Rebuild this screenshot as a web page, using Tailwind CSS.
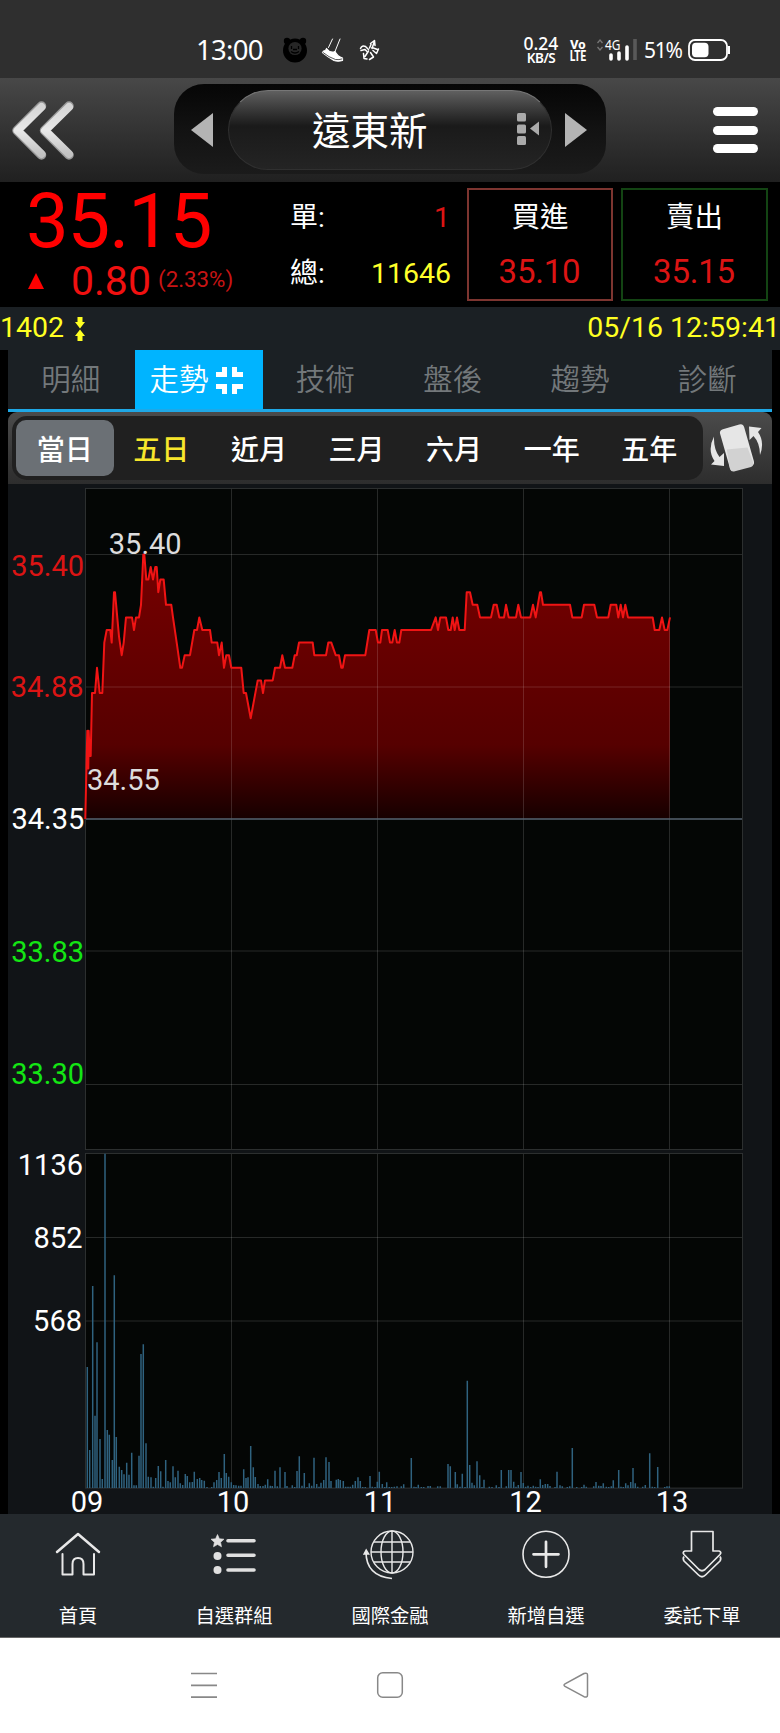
<!DOCTYPE html>
<html lang="zh-Hant">
<head>
    <meta charset="UTF-8">
    <meta name="viewport" content="width=device-width, initial-scale=1.0">
    <title>遠東新 1402</title>
    <script src="https://cdn.jsdelivr.net/npm/@tailwindcss/browser@4"></script>
</head>
<body class="w-[780px] h-[1733px] bg-black overflow-hidden flex flex-col font-[Roboto,'Noto_Sans_CJK_TC',sans-serif] leading-none text-white whitespace-nowrap">

    <!-- Phone status bar -->
    <div class="h-[78px] shrink-0 bg-[#2f2f2f] flex items-center pt-[22px] font-['Noto_Sans',sans-serif]">
        <span class="ml-[196px] w-[68px] text-[27.5px] tracking-[-0.7px]">13:00</span>
        <svg class="ml-[18px]" width="26" height="26" viewBox="0 0 26 26">
            <circle cx="5" cy="4" r="3.2" fill="#000"/><circle cx="21" cy="4" r="3.2" fill="#000"/>
            <circle cx="13" cy="13.5" r="12" fill="#000"/>
            <circle cx="13" cy="11.5" r="6.6" fill="#262626"/>
            <g fill="none" stroke="#000" stroke-width="1.3">
                <path d="M9.500 9v3M16.500 9v3M9 14.500q4 3 8 0M11 12.500h4"/>
            </g>
        </svg>
        <svg class="ml-[13px]" width="24" height="26" viewBox="0 0 24 26" fill="none" stroke="#fff" stroke-width="1.2" stroke-linecap="round" stroke-linejoin="round">
            <path d="M11.500 2L7.500 10.500M19 2L14 14.500" stroke-width="1"/>
            <path d="M5.500 11.500Q5 14 2.500 14L1.500 15.500Q7 20 13 23.500Q17 25 21.500 23.500V21Q16.500 19.500 14 14.500Q9 16.500 5.500 11.500z" fill="#fff"/>
            <path d="M2 15.500Q8 20.500 14.500 22.500Q18 23 21 22" stroke="#2f2f2f" stroke-width=".8"/>
        </svg>
        <svg class="ml-[14px]" width="21" height="22" viewBox="0 0 21 22" fill="none" stroke="#fff" stroke-width="1.5" stroke-linecap="round" stroke-linejoin="round">
            <path d="M11.500 4.500L15.500 1.500L16 6.500M15 3.500L13 9.500M12 5.500L10.500 9"/>
            <path d="M1.500 9.500Q3 6 6.500 7.500L9.500 10.500M2 11.500L6 10.500L8 12.500"/>
            <path d="M19.500 10L17.500 14.500L14 11.500M18.500 10.500L13 8.500"/>
            <path d="M4.500 14.500L5 19.500L8 20M6 17.500L9.500 12M10.500 20.500L14.500 18L11.500 13.500"/>
        </svg>
        <div class="ml-[142px] w-[38px] flex flex-col items-center font-medium">
            <span class="text-[17.5px] h-[17px] leading-[17px]">0.24</span>
            <span class="text-[13.5px] h-[13px] leading-[13px] tracking-[-0.5px] font-semibold">KB/S</span>
        </div>
        <svg class="ml-[9px] overflow-visible" width="18" height="24" viewBox="0 0 18 24" fill="#fff" font-family="Roboto" font-weight="800">
            <text x="1" y="11" font-size="13.5" textLength="15.5" lengthAdjust="spacingAndGlyphs">Vo</text>
            <text x="1" y="22.5" font-size="14" textLength="16" lengthAdjust="spacingAndGlyphs">LTE</text>
        </svg>
        <svg class="ml-[9px] overflow-visible" width="42" height="24" viewBox="0 0 42 24">
            <path d="M1.500 5l2.500-3 2.500 3M1.500 9l2.500 3 2.500-3" stroke="#777" stroke-width="1.3" fill="none"/>
            <text x="9" y="11.5" font-size="15" textLength="15.5" lengthAdjust="spacingAndGlyphs" fill="#fff" font-family="Noto Sans">4G</text>
            <path d="M15 17v4M23 15v6M31 9v12" stroke="#fff" stroke-width="3.6" stroke-linecap="round"/>
            <path d="M39 1v21" stroke="#595959" stroke-width="3.6"/>
        </svg>
        <span class="ml-[6px] w-[40px] text-[21px] tracking-[-1.2px]">51%</span>
        <svg class="ml-[4px]" width="43" height="22" viewBox="0 0 43 22">
            <rect x="1" y="1" width="38" height="20" rx="6" fill="none" stroke="#fff" stroke-width="1.8"/>
            <rect x="4" y="3.7" width="16.5" height="14.6" rx="4" fill="#fff"/>
            <path d="M41 7v8" stroke="#fff" stroke-width="2"/>
        </svg>
    </div>

    <!-- Title bar -->
    <header class="h-[104px] shrink-0 bg-linear-to-b from-[#484848] to-[#202020] flex items-center">
        <svg class="ml-[9px]" width="68" height="62" viewBox="0 0 68 62" fill="none" stroke-width="9.5" stroke-linecap="round" stroke-linejoin="round">
            <defs>
                <linearGradient id="silver" x1="0" y1="0" x2="0" y2="1">
                    <stop offset="0" stop-color="#d5d5d5"/><stop offset=".5" stop-color="#e9e9e9"/><stop offset="1" stop-color="#c2c2c2"/>
                </linearGradient>
            </defs>
            <path d="M32.500 7L8 31.500L32.500 56M60 7L35.500 31.500L60 56" stroke="#999"/>
            <path d="M32.500 8L8.500 31.500L32.500 55M60 8L36 31.500L60 55" stroke="url(#silver)" stroke-width="8"/>
        </svg>
        <div class="ml-[97px] mb-[3px] w-[432px] h-[90px] rounded-[30px] bg-linear-to-b from-[#060606] via-[#121212] to-[#1b1b1b] flex items-center">
            <svg class="ml-[17px] mt-[2px] shrink-0" width="22" height="36" viewBox="0 0 22 36"><path d="M0 18L22 1v34z" fill="#b4b4b4"/></svg>
            <div class="relative ml-[15px] mt-[2px] w-[324px] h-[80px] rounded-full border border-[#303030] border-t-[#777] bg-linear-to-b from-[#606060] via-[#1a1a1a] via-45% to-[#242424] flex items-center">
                <span class="ml-[83px] mt-[5px] text-[38.5px]">遠東新</span>
                <svg class="absolute left-[288px] top-[22px]" width="24" height="33" viewBox="0 0 24 33" fill="#aaa">
                    <rect width="9" height="8.5" rx="1.5"/><rect y="11.5" width="9" height="9" rx="1.5"/><rect y="23" width="9" height="9" rx="1.5"/>
                    <path d="M13 15.500l9-7v14z"/>
                </svg>
            </div>
            <svg class="ml-[13px] mt-[2px] shrink-0" width="22" height="36" viewBox="0 0 22 36"><path d="M22 18L0 1v34z" fill="#b4b4b4"/></svg>
        </div>
        <div class="ml-[107px] w-[45px] flex flex-col gap-[9.5px]">
            <div class="h-[9px] rounded-full bg-white"></div>
            <div class="h-[9px] rounded-full bg-white"></div>
            <div class="h-[9px] rounded-full bg-white"></div>
        </div>
    </header>

    <!-- Quote -->
    <section class="h-[125px] shrink-0 bg-black flex">
        <div class="w-[290px] text-[#ff0000]">
            <div class="pl-[26px] text-[76px] leading-[78px] tracking-[-1.1px]">35.15</div>
            <div class="pl-[28px] h-[42px] flex items-center">
                <svg width="16" height="16" viewBox="0 0 16 16"><path d="M8 0l8 16H0z" fill="#f00"/></svg>
                <span class="ml-[27px] w-[87px] text-[41px] text-[#f01010]">0.80</span>
                <span class="text-[22.3px] mb-[3px] text-[#c81414]">(2.33%)</span>
            </div>
        </div>
        <div class="w-[161px] flex flex-col text-[28.5px]">
            <div class="flex justify-between items-center mt-[21px] h-[30px]"><span class="text-[28px]">單:</span><span class="mr-px text-[#dc1414]">1</span></div>
            <div class="flex justify-between items-center mt-[26px] h-[30px]"><span class="text-[28px]">總:</span><span class="text-[#ffff2a]">11646</span></div>
        </div>
        <div class="ml-[16px] mt-[6px] w-[146px] h-[113px] border-2 border-[#7d3530] flex flex-col items-center text-[28.5px]">
            <span class="mt-[14px] h-[30px]">買進</span>
            <span class="mt-[21px] text-[33px] tracking-[-0.2px] mr-px text-[#dc1414]">35.10</span>
        </div>
        <div class="ml-[8px] mt-[6px] w-[147px] h-[113px] border-2 border-[#134413] flex flex-col items-center text-[28.5px]">
            <span class="mt-[14px] h-[30px]">賣出</span>
            <span class="mt-[21px] text-[33px] tracking-[-0.2px] mr-px text-[#dc1414]">35.15</span>
        </div>
    </section>

    <div class="h-[43px] shrink-0 bg-[#1b2024] flex items-center text-[28.5px] text-[#ffff22]">
        <span>1402</span>
        <svg class="ml-[11px]" width="10" height="24" viewBox="0 0 10 24" fill="#ff2">
            <path d="M2.500 0h5v5h2.500L5 11.500 0 5h2.500zM2.500 24h5v-5h2.500L5 12.500 0 19h2.500z"/>
        </svg>
        <span class="ml-auto">05/16 12:59:41</span>
    </div>

    <!-- Tabs -->
    <nav class="mx-[8px] h-[62px] shrink-0 bg-[#1b2024] border-b-[3px] border-[#1fa8e6] grid grid-cols-6 text-[29.5px] font-[350] text-[#73787b] [&>div]:pt-[2px]">
        <div class="flex items-center justify-center pr-[2px]">明細</div>
        <div class="flex items-center justify-center gap-[7px] pr-[6px] bg-[#00b4ff] text-white"><span>走勢</span>
            <svg width="27" height="27" viewBox="0 0 27 27" fill="none" stroke="#fff" stroke-width="5">
                <path d="M0 7.500h8.500V0M27 7.500h-8.500V0M0 19.500h8.500V27M27 19.500h-8.500V27"/>
            </svg>
        </div>
        <div class="flex items-center justify-center pr-[2px]">技術</div>
        <div class="flex items-center justify-center pr-[2px]">盤後</div>
        <div class="flex items-center justify-center pr-[2px]">趨勢</div>
        <div class="flex items-center justify-center pr-[2px]">診斷</div>
    </nav>

    <!-- Period selector -->
    <div class="mx-[8px] h-[72px] shrink-0 rounded-t-[9px] bg-linear-to-b from-[#4b4b4b] to-[#2d2d2d] flex items-center">
        <div class="ml-[4px] w-[691px] h-[64px] rounded-[15px] bg-[#202020] px-[4px] grid grid-cols-7 items-center text-center text-[28px] font-medium">
            <div class="h-[56px] leading-[61px] rounded-[10px] bg-[#6b7075]">當日</div>
            <div class="h-[56px] leading-[61px] pr-[2px] text-[#f7e62c]">五日</div>
            <div class="h-[56px] leading-[61px] pr-[2px]">近月</div>
            <div class="h-[56px] leading-[61px] pr-[2px]">三月</div>
            <div class="h-[56px] leading-[61px] pr-[2px]">六月</div>
            <div class="h-[56px] leading-[61px] pr-[2px]">一年</div>
            <div class="h-[56px] leading-[61px] pr-[2px]">五年</div>
        </div>
        <svg class="ml-[7px]" width="54" height="52" viewBox="0 0 54 52">
            <g fill="#e6e6e6">
                <rect x="14.5" y="4" width="25" height="43" rx="4" transform="rotate(-16 27 25.5)"/>
                <path d="M16.800 27.500L37.500 25.500L43 40Q44 44 41 45L24 49.500Q21 50 20 47z" fill="#d2d2d2"/>
                <path d="M39 4.500L51.500 6L48 10Q55 20 50 33Q50 21 43.500 14L39.500 18z"/>
                <path d="M14 44L1 42.500L4.500 39Q-3 28 4 14.500Q3.500 27 9.500 35L14 31z"/>
            </g>
        </svg>
    </div>

    <!-- Charts -->
    <svg class="mx-[8px] shrink-0 overflow-visible" width="764" height="1030" viewBox="8 484 764 1030" font-family="Roboto" font-size="29">
        <defs>
            <linearGradient id="area" gradientUnits="userSpaceOnUse" x1="0" y1="554" x2="0" y2="819">
                <stop offset="0" stop-color="#760000"/><stop offset=".5" stop-color="#600000"/><stop offset=".72" stop-color="#560000"/><stop offset="1" stop-color="#160000"/>
            </linearGradient>
        </defs>
        <rect x="8" y="484" width="764" height="1030" fill="#111417"/>
        <rect x="85.5" y="488.5" width="657" height="661" fill="#040605"/>
        <rect x="85.5" y="1153.5" width="657" height="334.5" fill="#040605"/>
        <path id="price-area" fill="url(#area)"/>
        <g fill="none" stroke="#fff" stroke-opacity=".14">
            <rect x="85.5" y="488.5" width="657" height="661"/>
            <rect x="85.5" y="1153.5" width="657" height="334.5"/>
            <path d="M231.500 489V1149M377.500 489V1149M523.500 489V1149M669.500 489V1149M231.500 1154V1488M377.500 1154V1488M523.500 1154V1488M669.500 1154V1488"/>
            <path d="M86 554.500H742M86 687H742M86 951H742M86 1084.500H742M86 1237.500H742M86 1321H742"/>
        </g>
        <path d="M86 819H742" stroke="#566370" stroke-width="1.3"/>
        <path id="price-line" fill="none" stroke="#f01414" stroke-width="2" stroke-linejoin="round"/>
        <path id="volume" fill="none" stroke="#2f627f" stroke-width="1.5"/>

        <g text-anchor="end">
            <text x="84" y="575.7" fill="#dc1414">35.40</text>
            <text x="83.5" y="697" fill="#dc1414">34.88</text>
            <text x="84.3" y="829" fill="#fff">34.35</text>
            <text x="84" y="962" fill="#14e614">33.83</text>
            <text x="84" y="1084" fill="#14e614">33.30</text>
            <text x="83" y="1174.7" fill="#fff">1136</text>
            <text x="82.5" y="1248" fill="#fff">852</text>
            <text x="82" y="1330.7" fill="#fff">568</text>
        </g>
        <text x="108.8" y="554.3" fill="#ddd">35.40</text>
        <text x="87" y="790" fill="#ddd">34.55</text>
        <g text-anchor="middle" fill="#fff">
            <text x="87" y="1511.7">09</text>
            <text x="233" y="1511.7">10</text>
            <text x="380" y="1511.7">11</text>
            <text x="525.5" y="1511.7">12</text>
            <text x="672" y="1511.7">13</text>
        </g>
    </svg>

    <!-- App navigation -->
    <nav class="h-[124px] shrink-0 bg-[#24292d] border-b border-[#666] grid grid-cols-5 text-[19.3px]">
        <div class="flex flex-col items-center">
            <svg class="mt-[13px]" width="50" height="52" viewBox="0 0 50 52" fill="none" stroke="#e8e8e8" stroke-width="2.5" stroke-linecap="round" stroke-linejoin="round">
                <path d="M4 25L25 7L46 25"/>
                <path d="M9.500 27V47.500H19.500V37Q19.500 31 25 31T30.500 37V47.500H41V27" stroke-width="2"/>
            </svg>
            <span class="mt-[28px]">首頁</span>
        </div>
        <div class="flex flex-col items-center">
            <svg class="mt-[14px]" width="50" height="52" viewBox="0 0 50 52" fill="#e0e0e0">
                <path d="M8.500 6.500l1.900 4.200 4.600.5-3.400 3.100.9 4.500-4-2.300-4 2.300.9-4.500L2 11.200l4.600-.5z" stroke="#e0e0e0" stroke-width=".6"/>
                <circle cx="8.5" cy="28" r="4"/><circle cx="8.5" cy="42" r="4"/>
                <path d="M19 12.700h26M19 27.300h26M19 42h26" stroke="#e0e0e0" stroke-width="3.6" stroke-linecap="round"/>
            </svg>
            <span class="mt-[27px]">自選群組</span>
        </div>
        <div class="flex flex-col items-center">
            <svg class="mt-[14px]" width="54" height="54" viewBox="0 0 54 54" fill="none" stroke="#e8e8e8" stroke-width="1.4">
                <circle cx="29" cy="24" r="21"/>
                <ellipse cx="29" cy="24" rx="11" ry="21"/>
                <path d="M29 3v42M8 24h42M11 14h36M11 34h36"/>
                <path d="M3 24Q3 48 29 50.500" stroke-width="1.6"/>
                <path d="M1 26L3.200 22l2.500 4z" fill="#e8e8e8"/>
            </svg>
            <span class="mt-[25px]">國際金融</span>
        </div>
        <div class="flex flex-col items-center">
            <svg class="mt-[14px]" width="50" height="52" viewBox="0 0 50 52" fill="none" stroke="#e8e8e8">
                <circle cx="25" cy="26.3" r="23" stroke-width="1.6"/>
                <path d="M12.500 26.300h25M25 13.800v25" stroke-width="2.7" stroke-linecap="round"/>
            </svg>
            <span class="mt-[27px]">新增自選</span>
        </div>
        <div class="flex flex-col items-center">
            <svg class="mt-[14px]" width="50" height="52" viewBox="0 0 50 52" fill="none" stroke="#e8e8e8" stroke-width="1.7" stroke-linejoin="round">
                <path d="M14.500 3.500h21.500V23H42Q45 24 43 26.500L28 41.500Q25 44 22 41.500L7 26.500Q5 24 8 23H14.500z"/>
                <path d="M7 28.500Q5.500 30.500 7 33L21.500 47Q25 50.500 28.500 47L43 33Q44.500 30.500 43 28.500"/>
            </svg>
            <span class="mt-[27px]">委託下單</span>
        </div>
    </nav>

    <!-- System navigation -->
    <div class="h-[95px] shrink-0 bg-white grid grid-cols-[1fr_112px_1fr] items-center pb-px">
        <svg class="justify-self-end mr-[116px]" width="28" height="28" viewBox="0 0 28 28" stroke="#888" stroke-width="1.7"><path d="M1 2.500h26M1 14.300h26M1 26.200h26"/></svg>
        <svg class="justify-self-center" width="28" height="28" viewBox="0 0 28 28" fill="none" stroke="#888" stroke-width="1.5"><rect x="1.7" y="1.7" width="24.6" height="24.6" rx="5"/></svg>
        <svg class="ml-[116px]" width="28" height="28" viewBox="0 0 28 28" fill="none" stroke="#888" stroke-width="1.5" stroke-linejoin="round"><path d="M3 12.800L22 2.500Q25.500 1.500 25.500 4V24Q25.500 27 22 25.700L3 15.400Q1 14 3 12.800z"/></svg>
    </div>

    <script>
        // [x, ticks above the previous close], x in thirds of a pixel
        const prices = [
            [256,0],[260,5],[262,7],[265,4],[266,7],[269,5],[272,5],[276,10],[285,10],[291,12],[299,10],[307,10],[313,14],[320,15],[331,15],[335,14],
            [342,18],[345,18],[357,14.5],[365,13],[371,14],[378,16],[396,16],[402,15],[408,16],[417,16],[423,17],[430,21],[433,21],[439,19],[445,19],
            [452,20],[459,19],[466,20],[470,20],[475,18],[481,19],[491,19],[498,17],[514,17],[519,16],[530,14],[541,12],[546,12],[554,13],[570,13],
            [583,15],[591,15],[598,16],[607,15],[630,15],[635,14],[652,14],[657,13],[665,14],[672,12],[679,13],[687,13],[694,12],[724,12],[731,10],
            [738,10],[752,8],[773,11],[783,11],[789,10],[795,11],[818,11],[825,12],[840,12],[847,13],[855,12],[877,12],[884,13],[890,13],[897,14],
            [938,14],[943,13],[978,13],[985,14],[994,14],[1007,13],[1017,13],[1024,12],[1028,12],[1035,13],[1096,13],[1108,15],[1127,15],[1134,14],
            [1141,14],[1146,15],[1163,15],[1170,14],[1177,14],[1184,15],[1191,14],[1198,14],[1204,15],[1293,15],[1307,16],[1314,15],[1321,16],
            [1338,16],[1345,15],[1352,15],[1358,16],[1364,15],[1371,16],[1378,15],[1394,15],[1400,18],[1410,18],[1418,17],[1432,17],[1440,16],
            [1473,16],[1481,17],[1490,17],[1498,16],[1512,16],[1518,17],[1526,16],[1548,16],[1555,17],[1563,16],[1591,16],[1599,17],[1607,16],
            [1620,18],[1623,18],[1629,17],[1710,17],[1717,16],[1745,16],[1752,17],[1783,17],[1791,16],[1825,16],[1832,17],[1849,17],[1855,16],
            [1862,17],[1869,16],[1876,17],[1884,16],[1958,16],[1964,15],[1978,15],[1986,16],[1994,15],[2002,15],[2010,16]
        ];
        // [x, bar height], both in thirds of a pixel
        const volumes = [
            [262,363],[269,114],[278,606],[285,217],[291,437],[300,147],[307,27],[315,1003],[322,174],[328,160],[337,84],[343,638],[349,153],
            [358,64],[365,54],[372,41],[380,76],[387,40],[395,106],[402,8],[409,8],[417,97],[423,402],[430,431],[438,134],[445,34],[453,32],
            [460,4],[467,30],[475,66],[482,50],[489,4],[497,84],[504,21],[511,17],[519,65],[526,32],[534,52],[541,14],[548,9],[556,42],[562,36],
            [569,17],[577,18],[583,49],[592,27],[599,30],[605,24],[613,22],[621,3],[635,3],[642,17],[650,24],[657,48],[664,30],[673,102],[679,45],
            [686,34],[694,17],[701,9],[708,8],[716,7],[723,7],[731,56],[738,30],[744,32],[752,126],[760,62],[766,33],[774,12],[781,6],[789,6],
            [796,10],[803,26],[811,7],[817,6],[825,52],[832,5],[840,62],[855,48],[861,6],[877,8],[884,3],[891,51],[898,95],[906,7],[913,45],
            [921,3],[928,14],[935,7],[942,91],[950,12],[957,4],[963,16],[971,24],[978,92],[987,78],[993,21],[1009,25],[1015,27],[1021,24],
            [1030,21],[1037,4],[1044,4],[1051,4],[1058,10],[1066,21],[1074,32],[1081,21],[1088,3],[1096,3],[1110,36],[1117,4],[1125,3],[1132,19],
            [1138,49],[1147,12],[1154,3],[1160,17],[1168,3],[1175,3],[1183,4],[1191,5],[1204,5],[1211,11],[1234,90],[1242,4],[1248,3],[1255,10],
            [1264,3],[1271,3],[1284,6],[1291,6],[1313,5],[1321,5],[1344,72],[1351,65],[1366,48],[1372,11],[1380,4],[1387,43],[1395,3],[1402,322],
            [1409,69],[1416,16],[1423,8],[1431,80],[1439,38],[1446,3],[1452,25],[1468,4],[1476,3],[1489,8],[1497,3],[1504,54],[1519,5],[1526,54],
            [1533,54],[1541,19],[1548,4],[1555,9],[1563,48],[1570,15],[1577,4],[1584,7],[1592,3],[1600,7],[1607,4],[1614,3],[1621,26],[1628,9],
            [1636,12],[1643,12],[1650,6],[1665,3],[1671,49],[1680,8],[1687,5],[1702,3],[1709,5],[1717,120],[1730,3],[1745,3],[1752,10],[1759,4],
            [1781,5],[1788,18],[1796,7],[1803,6],[1810,14],[1819,4],[1826,3],[1834,5],[1840,23],[1856,54],[1863,4],[1870,3],[1877,14],[1884,8],
            [1892,18],[1899,60],[1906,14],[1913,4],[1928,4],[1936,9],[1949,104],[1957,4],[1964,3],[1973,63],[1994,3],[2001,5],[2008,5]
        ];

        // One tick (0.05) is 12.6px, previous close sits at y = 819
        const line = prices.map(([x, n]) => `${(x / 3).toFixed(1)} ${(819 - n * 12.6).toFixed(1)}`).join('L');
        document.getElementById('price-line').setAttribute('d', 'M' + line);
        document.getElementById('price-area').setAttribute('d', 'M' + line + 'V819H85.5z');

        const bars = volumes.map(([x, h]) => `M${(x / 3).toFixed(1)} 1488v${(-h / 3).toFixed(1)}`).join('');
        document.getElementById('volume').setAttribute('d', bars);
    </script>
</body>
</html>
